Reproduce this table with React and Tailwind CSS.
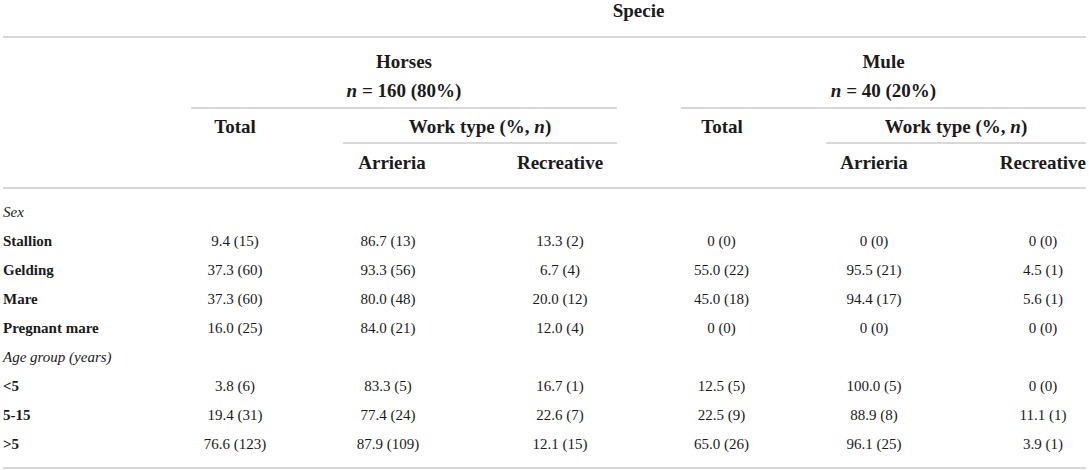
import React from 'react'

// Demographic breakdown table: horses vs mules, split by work type.
const cols = 'grid grid-cols-[188px_152px_132px_142px_64px_145px_132px_128px]'

const rows = [
  { section: 'Sex' },
  { label: 'Stallion', v: ['9.4 (15)', '86.7 (13)', '13.3 (2)', '0 (0)', '0 (0)', '0 (0)'] },
  { label: 'Gelding', v: ['37.3 (60)', '93.3 (56)', '6.7 (4)', '55.0 (22)', '95.5 (21)', '4.5 (1)'] },
  { label: 'Mare', v: ['37.3 (60)', '80.0 (48)', '20.0 (12)', '45.0 (18)', '94.4 (17)', '5.6 (1)'] },
  { label: 'Pregnant mare', v: ['16.0 (25)', '84.0 (21)', '12.0 (4)', '0 (0)', '0 (0)', '0 (0)'] },
  { section: 'Age group (years)' },
  { label: '<5', v: ['3.8 (6)', '83.3 (5)', '16.7 (1)', '12.5 (5)', '100.0 (5)', '0 (0)'] },
  { label: '5-15', v: ['19.4 (31)', '77.4 (24)', '22.6 (7)', '22.5 (9)', '88.9 (8)', '11.1 (1)'] },
  { label: '>5', v: ['76.6 (123)', '87.9 (109)', '12.1 (15)', '65.0 (26)', '96.1 (25)', '3.9 (1)'] },
]

function Line({ className = '' }) {
  return <div className={`h-[2px] bg-[#d8d8d8] ${className}`} />
}

export default function App() {
  return (
    <div className="w-[1089px] h-[470px] bg-white px-[3px] text-[#1c1a1b] font-[family-name:'Liberation_Serif',serif] overflow-hidden">
      {/* header */}
      <div className="text-[19px] font-bold">
        <div className={`${cols} h-[36px]`}>
          <div className="col-start-2 col-span-7 text-center leading-[22px]">Specie</div>
        </div>
        <Line />

        <div className={`${cols} h-[69px] pt-[9px] leading-[29px]`}>
          <div className="col-start-2 col-span-3 text-center">
            <div>Horses</div>
            <div><i>n</i> = 160 (80%)</div>
          </div>
          <div className="col-start-6 col-span-3 text-center">
            <div>Mule</div>
            <div><i>n</i> = 40 (20%)</div>
          </div>
        </div>
        <div className={cols}>
          <Line className="col-start-2 col-span-3" />
          <Line className="col-start-6 col-span-3" />
        </div>

        <div className={`${cols} h-[33px] pt-[6px] leading-[24px]`}>
          <div className="col-start-2 text-center pr-[64px]">Total</div>
          <div className="col-span-2 text-center">Work type (%, <i>n</i>)</div>
          <div className="col-start-6 text-center pr-[63px]">Total</div>
          <div className="col-span-2 text-center">Work type (%, <i>n</i>)</div>
        </div>
        <div className={cols}>
          <Line className="col-start-3 col-span-2" />
          <Line className="col-start-7 col-span-2" />
        </div>

        <div className={`${cols} h-[43px] pt-[7px] leading-[24px]`}>
          <div className="col-start-3 text-center pr-[34px]">Arrieria</div>
          <div className="text-center pl-[28px]">Recreative</div>
          <div className="col-start-7 text-center pr-[36px]">Arrieria</div>
          <div className="text-right">Recreative</div>
        </div>
      </div>
      <Line />

      {/* body */}
      <div className="pt-[9px] pb-[8px] text-[15px]">
        {rows.map((r, i) =>
          r.section ? (
            <div key={i} className="h-[29px] leading-[29px] italic">{r.section}</div>
          ) : (
            <div key={i} className={`${cols} h-[29px] leading-[29px]`}>
              <div className="font-bold">{r.label}</div>
              <div className="text-center pr-[64px]">{r.v[0]}</div>
              <div className="text-center pr-[42px]">{r.v[1]}</div>
              <div className="text-center pl-[28px]">{r.v[2]}</div>
              <div />
              <div className="text-center pr-[64px]">{r.v[3]}</div>
              <div className="text-center pr-[36px]">{r.v[4]}</div>
              <div className="text-center pl-[42px]">{r.v[5]}</div>
            </div>
          )
        )}
      </div>
      <Line />
    </div>
  )
}
